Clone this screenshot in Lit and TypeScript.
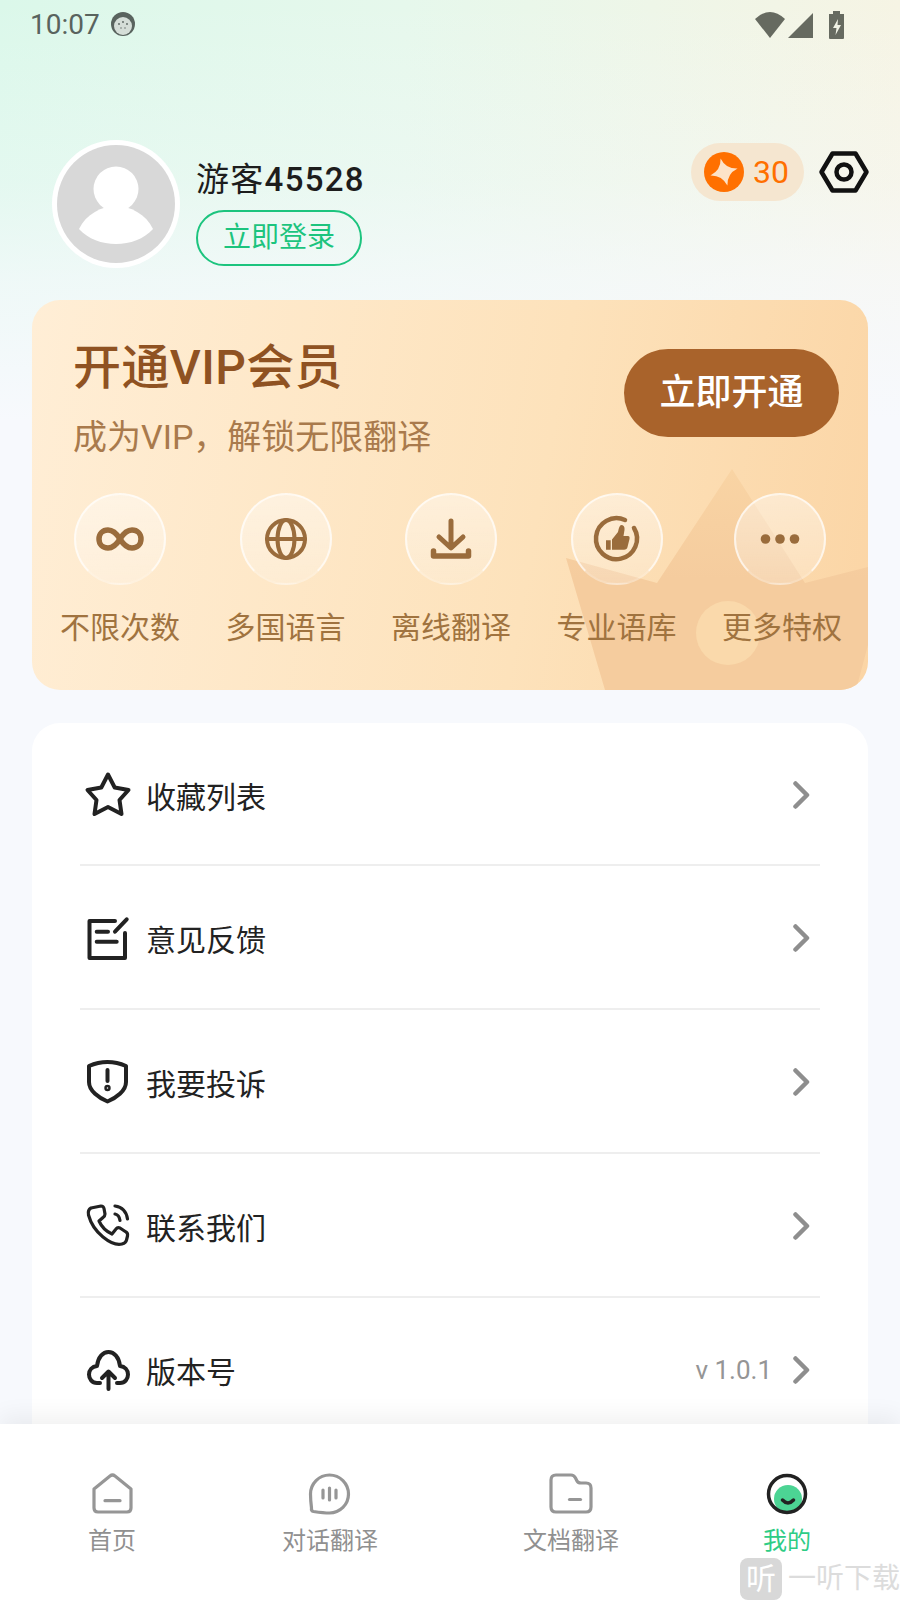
import { LitElement, html, css, svg } from 'lit';
import { customElement } from 'lit/decorators.js';

// feature icons of the VIP card, drawn in a 56x56 box
const featureIcons = [
  svg`<path class="line" stroke-width="5.5" d="M28 28C24 21.5 20.5 19 16 19C10.5 19 7 23 7 28C7 33 10.5 37 16 37C20.5 37 24 34.5 28 28C32 21.5 35.5 19 40 19C45.5 19 49 23 49 28C49 33 45.5 37 40 37C35.5 37 32 34.5 28 28Z"/>`,
  svg`<g class="line" stroke-width="4"><circle cx="28" cy="28" r="19"/><ellipse cx="28" cy="28" rx="8.5" ry="19"/><path d="M9 28H47"/></g>`,
  svg`<g class="line" stroke-width="5"><path d="M28 10V36M16 26L28 37L40 26"/><path stroke-width="5.5" d="M10.5 40V45H45.5V40"/></g>`,
  svg`<path class="line" stroke-width="4.5" d="M36 9A20.5 20.5 0 1 0 45 17"/><path class="solid" d="M17 29.3h4.7v9.4H17zM23 38.7V28.5L29 21Q30 15 32 14Q36 14 35.5 19L34.5 25H39Q41 25 40.5 28L38.5 36Q38 38.7 35 38.7Z"/>`,
  svg`<g class="solid"><circle cx="13.5" cy="28" r="4.8"/><circle cx="28" cy="28" r="4.8"/><circle cx="42.5" cy="28" r="4.8"/></g>`,
];

const features = ['不限次数', '多国语言', '离线翻译', '专业语库', '更多特权'];

// menu icons, 48x48 box
const menu = [
  {
    label: '收藏列表',
    icon: svg`<path d="M24 3.500L30.700 16.500L44.500 19L35.500 29L37.500 43L24 36L10.500 43L12.500 29L3.500 19L17.300 16.500Z"/>`,
  },
  {
    label: '意见反馈',
    icon: svg`<path transform="translate(0 1)" d="M31 6H5.5V43H41V18M12.7 16.7H24M12.7 26.7H32.7M31 16.7L42.7 4.3"/>`,
  },
  {
    label: '我要投诉',
    icon: svg`<path d="M5 8Q14 4 23.5 4Q33 4 42 8V24C42 33 32 40 23.5 43.500C15 40 5 33 5 24Z"/><path d="M23.500 12V23"/><circle cx="23.500" cy="30" r="1.200"/>`,
  },
  {
    label: '联系我们',
    icon: svg`<path stroke-width="3.2" d="M7 6L17 4Q19.500 4 20 6.500L21 12Q21 14 19 15.500L15 19Q19 28 28 32L32 27Q33.500 25 36 26L42 30Q44 31 43.500 34L42.500 38Q42 41 38 42Q30 44 19 35Q8 26 4.500 13Q3.500 8 7 6Z"/><path stroke-width="3.200" d="M31 4C38 5 42.500 10 43.500 17M31 12C33.500 12.500 35.500 15 36 18.500"/>`,
  },
  {
    label: '版本号',
    value: 'v 1.0.1',
    icon: svg`<path d="M16 37H13C8 37 5 33 5 28.500C5 24 8 20.500 13 20C14 11 19 6 24.500 6C30 6 35 11 36 20C41 20.500 44 24 44 28.500C44 33 41 37 36 37H33"/><path d="M24.500 43V26M18 32L24.500 25.500L31 32"/>`,
  },
];

const tabs = [
  {
    label: '首页',
    icon: svg`<path d="M6 19L22 6Q24.500 4 27 6L43 19V38Q43 42 39 42H10Q6 42 6 38Z"/><path d="M17 30.700H32"/>`,
  },
  {
    label: '对话翻译',
    icon: svg`<path transform="translate(-1 0)" d="M24.500 5C35 5 43.500 13.500 43.500 24C43.500 34.500 35 43 24.500 43C20 43 12 42 8.500 41.500Q6 41 6.500 38C6 34 5.500 28 5.500 24C5.500 13.500 14 5 24.500 5Z"/><path transform="translate(-1 0)" d="M18 20V28M24.500 18V30M31 20V28"/>`,
  },
  {
    label: '文档翻译',
    icon: svg`<path d="M10 5H24Q27 5 28.500 8L30 11Q31 13 34 13H39Q44 13 44 18V37Q44 42 39 42H9Q4 42 4 37V10Q4 5 9 5Z"/><path d="M22.500 29.500H33.500"/>`,
  },
  {
    label: '我的',
    active: true,
    icon: svg`<circle class="fill" cx="25" cy="29" r="14"/><circle class="ring" cx="24" cy="24" r="18.500"/><path class="ring" d="M19.500 30Q25 36 30.500 30"/>`,
  },
];

@customElement('app-root')
export class AppRoot extends LitElement {
  static styles = css`
    :host {
      display: block;
      position: relative;
      width: 900px;
      height: 1600px;
      overflow: hidden;
      font-family: Roboto, "Noto Sans CJK SC", sans-serif;
      color: #222;
      background:
        linear-gradient(to bottom, rgba(247, 249, 253, 0) 0, rgba(247, 249, 253, 0.3) 180px, rgba(247, 249, 253, 0.7) 280px, #f7f9fd 420px) no-repeat,
        linear-gradient(to right, #dbf8ea 0, #e6f8ec 45%, #f6f4e4 100%) no-repeat;
      background-color: #f7f9fd;
      background-size: 100% 420px, 100% 420px;
    }

    .status {
      display: flex;
      align-items: center;
      height: 48px;
      padding: 0 53px 0 30px;
      color: #59635e;
      font-size: 28px;
    }
    .status .face { margin-left: 10px; }
    .status .right { margin-left: auto; }

    .profile {
      display: flex;
      align-items: flex-start;
      height: 160px;
      margin-top: 92px;
      padding: 0 28px 0 52px;
    }
    .avatar {
      flex: none;
      width: 128px;
      height: 128px;
      border-radius: 50%;
      background: #fff;
    }
    .who {
      display: flex;
      flex-direction: column;
      align-items: flex-start;
      margin-left: 16px;
      padding-top: 19px;
    }
    .name {
      font-size: 33px;
      line-height: 42px;
      letter-spacing: 1.3px;
      color: #1d1d1d;
    }
    .name .num { font-weight: 500; }
    .login {
      width: 166px;
      height: 56px;
      margin-top: 9px;
      box-sizing: border-box;
      border: 2px solid #1cc47e;
      border-radius: 28px;
      color: #1cc47e;
      font-size: 28px;
      line-height: 52px;
      text-align: center;
    }
    .points {
      display: flex;
      align-items: center;
      height: 58px;
      margin: 3px 12px 0 auto;
      padding: 0 15px 0 13px;
      border-radius: 29px;
      background: #f5e6d0;
      color: #ff7000;
      font-size: 32px;
    }
    .points svg { margin-right: 9px; }
    .gear { margin-top: 4px; }

    .vip {
      position: relative;
      height: 390px;
      margin: 0 32px;
      overflow: hidden;
      border-radius: 28px;
      background: linear-gradient(100deg, #ffeed6 0, #fde2bb 60%, #fbd5a5 100%);
    }
    .crown { position: absolute; left: 0; top: 0; }
    .vip-head {
      position: relative;
      display: flex;
      justify-content: space-between;
      padding: 42px 29px 0 41px;
      height: 151px;
    }
    .vip-title {
      font-size: 48px;
      line-height: 52px;
      font-weight: 500;
      letter-spacing: 0.4px;
      color: #8f5222;
    }
    .vip-sub {
      margin-top: 23px;
      font-size: 34px;
      line-height: 40px;
      color: #a97a4c;
    }
    .vip-btn {
      width: 215px;
      height: 88px;
      margin-top: 7px;
      border-radius: 44px;
      background: #a9632b;
      color: #fff;
      font-size: 36px;
      font-weight: 500;
      line-height: 88px;
      text-align: center;
    }
    .features {
      position: relative;
      display: flex;
      justify-content: space-between;
      padding: 0 26px 0 28px;
    }
    .feature {
      display: flex;
      flex-direction: column;
      align-items: center;
      width: 120px;
      color: #a0733f;
      font-size: 30px;
      line-height: 40px;
    }
    .feature:last-child .circle { margin-right: 5px; }
    .circle {
      display: flex;
      align-items: center;
      justify-content: center;
      box-sizing: border-box;
      width: 92px;
      height: 92px;
      margin-bottom: 23px;
      border: 2px solid rgba(255, 255, 255, 0.65);
      border-bottom-color: rgba(255, 255, 255, 0.15);
      border-radius: 50%;
      background: linear-gradient(to bottom, rgba(255, 255, 255, 0.42), rgba(255, 255, 255, 0.22));
    }
    .circle .line { fill: none; stroke: #9a6c3c; stroke-linecap: round; stroke-linejoin: round; }
    .circle .solid { fill: #9a6c3c; }

    .menu {
      height: 800px;
      margin: 33px 32px 0;
      padding: 0 48px;
      border-radius: 28px;
      background: #fff;
    }
    .row {
      display: flex;
      align-items: center;
      height: 140px;
      padding: 2px 10px 0 4px;
      font-size: 30px;
      border-bottom: 2px solid #eee;
    }
    .row:first-child { height: 139px; }
    .row:last-child { border-bottom: 0; }
    .row .icon {
      flex: none;
      margin-right: 14px;
      fill: none;
      stroke: #222;
      stroke-width: 4;
      stroke-linecap: round;
      stroke-linejoin: round;
    }
    .row .value {
      margin-left: auto;
      margin-right: 18px;
      color: #959595;
      font-size: 26px;
    }
    .row .chev { margin-left: auto; fill: none; stroke: #8e8e8e; stroke-width: 4.5; stroke-linecap: round; stroke-linejoin: round; }
    .row .value + .chev { margin-left: 0; }

    .tabbar {
      position: absolute;
      left: 0;
      right: 0;
      bottom: 0;
      display: grid;
      grid-template-columns: 224px 212px 270px 162px;
      height: 176px;
      padding-top: 46px;
      box-sizing: border-box;
      background: #fff;
      box-shadow: 0 -8px 22px rgba(0, 0, 0, 0.06);
    }
    .tab {
      display: flex;
      flex-direction: column;
      align-items: center;
      color: #909090;
      font-size: 24px;
      line-height: 34px;
    }
    .tab svg {
      margin-bottom: 6px;
      fill: none;
      stroke: #969696;
      stroke-width: 3.2;
      stroke-linecap: round;
      stroke-linejoin: round;
    }
    .tab.on { color: #2ecc85; }
    .tab.on .fill { fill: #4cd494; stroke: none; }
    .tab.on .ring { stroke: #222; stroke-width: 3.5; }

    .mark {
      position: absolute;
      right: 0;
      bottom: 0;
      display: flex;
      align-items: center;
      gap: 6px;
      color: #dcdcdc;
      font-size: 28px;
      line-height: 42px;
      white-space: nowrap;
    }
    .mark-logo {
      width: 42px;
      height: 42px;
      border-radius: 8px;
      background: #d8d8d8;
      color: #fff;
      font-size: 30px;
      text-align: center;
    }
  `;

  render() {
    return html`
      <div class="status">
        <span>10:07</span>
        <svg class="face" width="26" height="26" viewBox="0 0 26 26">
          <circle cx="13" cy="13" r="12" fill="#59635e"/>
          <circle cx="13" cy="15" r="9" fill="#d5ded8"/>
          <g fill="#59635e">
            <circle cx="9" cy="13" r="0.9"/><circle cx="13" cy="11" r="0.9"/><circle cx="17" cy="13" r="0.9"/>
            <circle cx="11" cy="17" r="0.7"/><circle cx="15" cy="17" r="0.7"/>
          </g>
        </svg>
        <svg class="right" width="92" height="30" viewBox="0 0 92 30" fill="#666a60">
          <path d="M0 10Q15 -4 30 10L15 29Z"/>
          <path d="M33 29L58 4V29Z"/>
          <path d="M74 5h4V2h7v3h4v24q0 1-1 1H75q-1 0-1-1Z"/>
          <path fill="#f1f3e6" d="M83 10L78 19h3.500l-1 7 5.500-10H82.500Z"/>
        </svg>
      </div>

      <div class="profile">
        <svg class="avatar" viewBox="0 0 128 128">
          <circle cx="64" cy="64" r="59" fill="#d8d8d8"/>
          <circle cx="64" cy="49" r="22.500" fill="#fff"/>
          <path fill="#fff" d="M27 89C34 74 50 66 64 66C78 66 94 74 101 89C92 99 78 104 64 104C50 104 36 99 27 89Z"/>
        </svg>
        <div class="who">
          <div class="name">游客<span class="num">45528</span></div>
          <div class="login">立即登录</div>
        </div>
        <div class="points">
          <svg width="40" height="40" viewBox="-20 -20 40 40">
            <circle r="20" fill="#ff7000"/>
            <path transform="rotate(-14)" fill="#fde3c8" d="M0 -14Q2.500 -2.500 14 0Q2.500 2.500 0 14Q-2.500 2.500 -14 0Q-2.500 -2.500 0 -14Z"/>
          </svg>
          <span>30</span>
        </div>
        <svg class="gear" width="56" height="56" viewBox="0 0 56 56" fill="none" stroke="#111" stroke-width="4.500" stroke-linejoin="round">
          <path d="M5.500 28L16.500 9.500H39.500L50.500 28L39.500 46.500H16.500Z"/>
          <circle cx="28" cy="28" r="7.500"/>
        </svg>
      </div>

      <div class="vip">
        <svg class="crown" width="836" height="390" viewBox="0 0 836 390">
          <defs>
            <linearGradient id="crownFill" x1="0" y1="0" x2="0" y2="1">
              <stop offset="0" stop-color="#f9d4a4"/>
              <stop offset="0.5" stop-color="#f5cc9e"/>
            </linearGradient>
          </defs>
          <path fill="url(#crownFill)" d="M534 258L625 283L700 169L773 283L836 267V345L824 390H573Z"/>
          <circle cx="696" cy="333" r="32" fill="#fad9ab"/>
        </svg>
        <div class="vip-head">
          <div>
            <div class="vip-title">开通VIP会员</div>
            <div class="vip-sub">成为VIP，解锁无限翻译</div>
          </div>
          <div class="vip-btn">立即开通</div>
        </div>
        <div class="features">
          ${features.map((label, i) => html`
            <div class="feature">
              <div class="circle">
                <svg width="56" height="56" viewBox="0 0 56 56">${featureIcons[i]}</svg>
              </div>
              <span>${label}</span>
            </div>
          `)}
        </div>
      </div>

      <div class="menu">
        ${menu.map((item) => html`
          <div class="row">
            <svg class="icon" width="48" height="48" viewBox="0 0 48 48">${item.icon}</svg>
            <span>${item.label}</span>
            ${item.value ? html`<span class="value">${item.value}</span>` : ''}
            <svg class="chev" width="20" height="30" viewBox="0 0 20 30"><path d="M5.500 3.500L17 15L5.500 26.500"/></svg>
          </div>
        `)}
      </div>

      <div class="tabbar">
        ${tabs.map((tab) => html`
          <div class="tab ${tab.active ? 'on' : ''}">
            <svg width="48" height="48" viewBox="0 0 48 48">${tab.icon}</svg>
            <span>${tab.label}</span>
          </div>
        `)}
      </div>

      <div class="mark">
        <span class="mark-logo">听</span>
        <span>一听下载</span>
      </div>
    `;
  }
}
